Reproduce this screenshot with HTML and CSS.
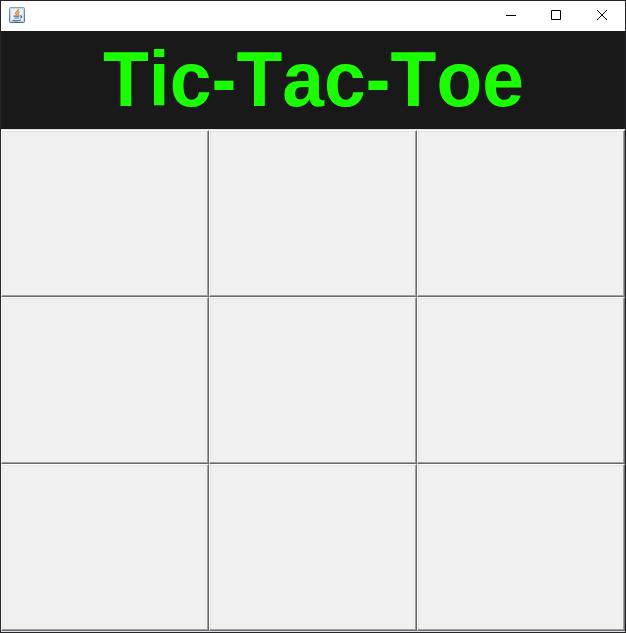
FILE: index.html
```html
<!DOCTYPE html>
<html lang="en">
<head>
<meta charset="utf-8">
<title>Tic-Tac-Toe</title>
<link rel="stylesheet" href="styles.css">
</head>
<body>
<main class="window">
  <header class="titlebar">
    <svg class="java-icon" width="16" height="16" viewBox="0 0 16 16">
      <defs><linearGradient id="tile" x2="0" y2="1"><stop stop-color="#7fa6bd"/><stop offset="1" stop-color="#426c8d"/></linearGradient></defs>
      <rect x=".5" y=".5" width="15" height="15" rx="1" fill="#e9eff3" stroke="url(#tile)"/>
      <rect x="1.5" y="1.5" width="13" height="13" fill="none" stroke="#c5d5df"/>
      <path d="M9.5 2c.5 2-3.3 2.4-2.8 4.3.2.7.8 1 .8 1.7M10.5 4.7c-1.8.8-2 1.4-1.4 2.1.4.5.1 1-.3 1.4" fill="none" stroke="#e87d1c" stroke-width="1.4"/>
      <path d="M4.5 9.2h6M5.5 11h4.5M3.5 13.3c3 .7 6 .6 8.5-.3M11 9c2.3-.6 2.3 1.6.2 2.2" fill="none" stroke="#4a7392" stroke-width="1.2"/>
    </svg>
    <nav class="controls">
      <button aria-label="Minimize"><svg width="10" height="10" viewBox="0 0 10 10"><path d="M0 5.5h10"/></svg></button>
      <button aria-label="Maximize"><svg width="10" height="10" viewBox="0 0 10 10"><path d="M.5.5h9v9h-9z"/></svg></button>
      <button aria-label="Close"><svg width="10" height="10" viewBox="0 0 10 10"><path d="M0 0l10 10M10 0L0 10"/></svg></button>
    </nav>
  </header>
  <h1 class="banner"><span class="banner-text">Tic-Tac-Toe</span></h1>
  <section class="board">
    <button class="cell"></button><button class="cell"></button><button class="cell"></button>
    <button class="cell"></button><button class="cell"></button><button class="cell"></button>
    <button class="cell"></button><button class="cell"></button><button class="cell"></button>
  </section>
</main>
</body>
</html>
```
FILE: styles.css
```css
* { box-sizing: border-box; }
body { margin: 0; overflow: hidden; background: #fff; }
.window {
  width: 626px;
  height: 633px;
  display: flex;
  flex-direction: column;
  border: 1px solid #25252a;
  background: #e3e3e3;
}
.titlebar {
  flex: 0 0 30px;
  display: flex;
  align-items: center;
  justify-content: space-between;
  padding-left: 8px;
  background: #fff;
}
.java-icon { display: block; margin-bottom: 2px; }
.controls { display: flex; height: 30px; }
.controls button {
  width: 46px;
  padding: 0 0 2px;
  border: 0;
  background: none;
  display: flex;
  align-items: center;
  justify-content: center;
}
.controls button:nth-child(2) { width: 44px; }
.controls button:nth-child(3) { width: 47px; padding-left: 1px; }
.controls svg { fill: none; stroke: #000; stroke-width: 1; overflow: visible; }
.banner {
  flex: 0 0 98px;
  margin: 0;
  background: #191919;
  color: #19ff00;
  font: bold 75px/98px "Liberation Sans", Arial, sans-serif;
  font-kerning: none;
  text-align: center;
}
.banner-text {
  display: inline-block;
  padding-left: 1px;
  transform: scaleY(1.045);
  transform-origin: 0 75px;
}
.board {
  display: grid;
  grid-template-columns: repeat(3, 208px);
  grid-template-rows: repeat(3, 167px);
  padding-top: 1px;
}
.cell {
  padding: 0;
  border: 1px solid;
  border-color: #fff #696969 #696969 #fff;
  background: #f0f0f0;
  box-shadow: inset -1px -1px #a0a0a0, inset 1px 1px #e3e3e3;
}
```
